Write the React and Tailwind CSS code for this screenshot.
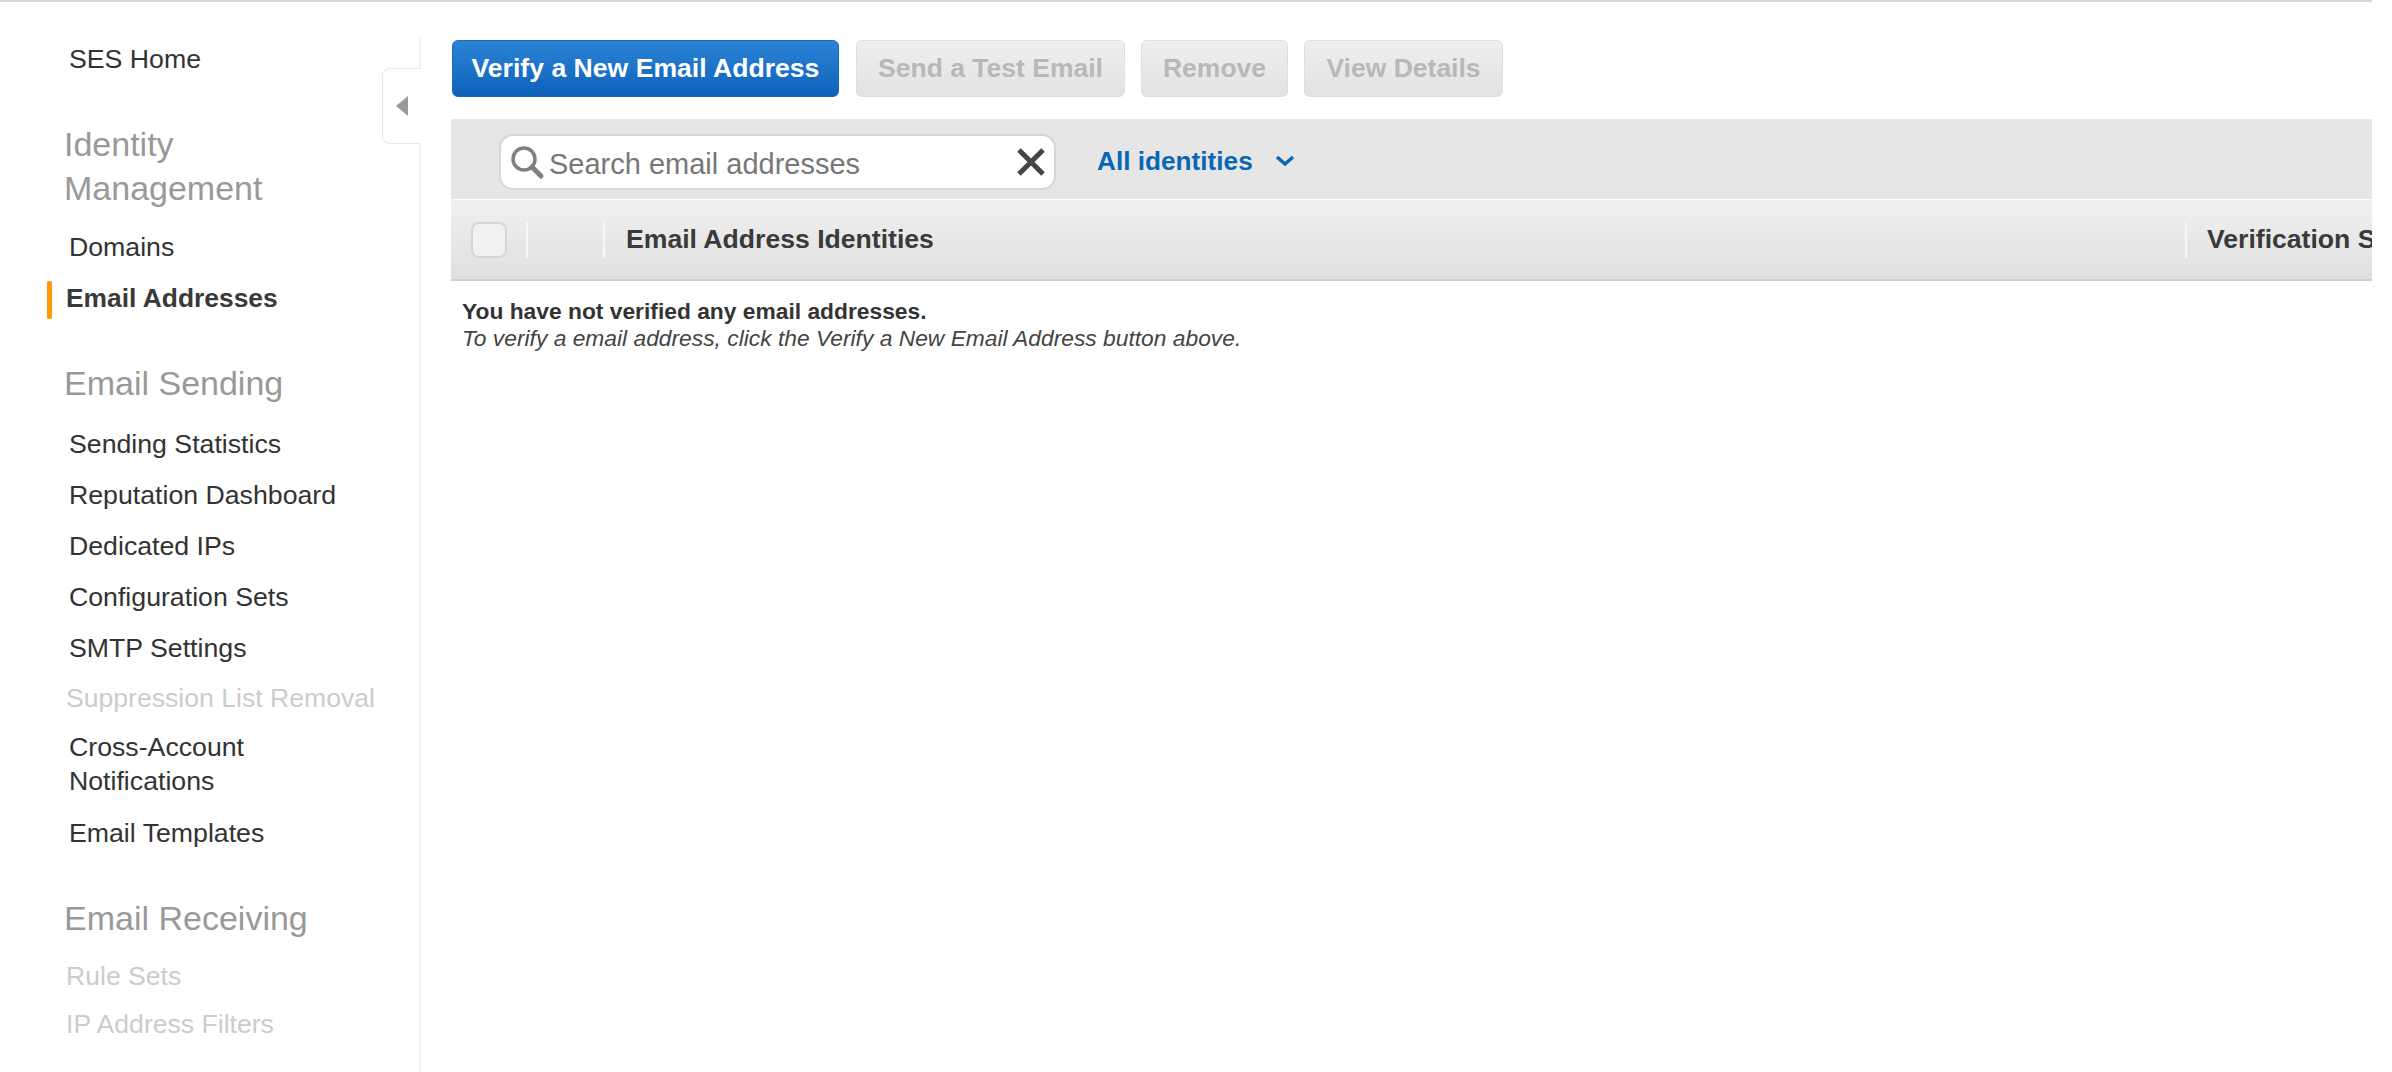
import React from 'react';

const font = 'font-["Liberation_Sans",Arial,sans-serif]';

const NavLink = ({ children, className = '' }) => (
  <div className={`pl-[69px] text-[26.7px] leading-[34px] text-[#333] ${className}`}>{children}</div>
);

const NavMuted = ({ children, className = '' }) => (
  <div className={`pl-[66px] text-[26.6px] leading-[34px] text-[#ccc] ${className}`}>{children}</div>
);

const NavHeading = ({ children, className = '' }) => (
  <div className={`pl-[64px] pr-[100px] text-[34px] leading-[44px] text-[#999] ${className}`}>{children}</div>
);

const Sidebar = () => (
  <aside className="relative h-[1034px] w-[421px] shrink-0 border-r-2 border-[#f2f2f2] pt-[4px]">
    <NavLink>SES Home</NavLink>
    <NavHeading className="mt-[46px]">Identity Management</NavHeading>
    <NavLink className="mt-[20px]">Domains</NavLink>
    <div className="relative mt-[17px] pl-[66px] text-[26.4px] leading-[34px] font-bold text-[#3a3a3a]">
      <span className="absolute left-[47px] top-0 h-[38px] w-[5px] rounded-[2px] bg-[#ff9900]"></span>
      Email Addresses
    </div>
    <NavHeading className="mt-[46px]">Email Sending</NavHeading>
    <NavLink className="mt-[22px]">Sending Statistics</NavLink>
    <NavLink className="mt-[17px]">Reputation Dashboard</NavLink>
    <NavLink className="mt-[17px]">Dedicated IPs</NavLink>
    <NavLink className="mt-[17px]">Configuration Sets</NavLink>
    <NavLink className="mt-[17px]">SMTP Settings</NavLink>
    <NavMuted className="mt-[16px]">Suppression List Removal</NavMuted>
    <NavLink className="mt-[15px]">Cross-Account</NavLink>
    <NavLink>Notifications</NavLink>
    <NavLink className="mt-[18px]">Email Templates</NavLink>
    <NavHeading className="mt-[46px]">Email Receiving</NavHeading>
    <NavMuted className="mt-[19px]">Rule Sets</NavMuted>
    <NavMuted className="mt-[14px]">IP Address Filters</NavMuted>

    <div className="absolute right-[-2px] top-[30px] flex h-[76px] w-[39px] items-center rounded-l-[8px] border border-r-0 border-[#e8e8e8] bg-white pl-[13px]">
      <svg width="12" height="20" viewBox="0 0 12 20"><path d="M12 0v20L0 10z" fill="#999" /></svg>
    </div>
  </aside>
);

const DisabledButton = ({ w, children }) => (
  <button className={`h-[57px] ${w} rounded-[6px] border border-[#dedede] bg-gradient-to-b from-[#efefef] to-[#e2e2e2] text-[26.5px] font-bold text-[#b8b8b8]`}>
    {children}
  </button>
);

export default function App() {
  return (
    <div className={`${font} h-[1072px] w-[2392px] overflow-hidden bg-white`}>
      <div className="h-[2px] w-[2372px] bg-[#d8d8d8]"></div>
      <div className="flex w-[2372px] pt-[36px]">
        <Sidebar />
        <main className="ml-[30px] min-w-0 flex-1 overflow-hidden pt-[2px]">
          <div className="flex h-[57px] items-center">
            <button className="ml-[1px] h-[57px] w-[387px] rounded-[6px] border border-[#1a6ab8] bg-gradient-to-b from-[#2b83d6] to-[#0a62b8] text-[26.6px] font-bold text-white">
              Verify a New Email Address
            </button>
            <div className="ml-[17px] flex gap-[16px]">
              <DisabledButton w="w-[269px]">Send a Test Email</DisabledButton>
              <DisabledButton w="w-[147px]">Remove</DisabledButton>
              <DisabledButton w="w-[199px]">View Details</DisabledButton>
            </div>
          </div>

          <div className="mt-[22px] flex h-[80px] items-start bg-[#e6e6e6] pl-[48px] pt-[15px]">
            <div className="flex h-[56px] w-[557px] items-center rounded-[14px] border-2 border-[#d6d6d6] bg-white pl-[8px] pr-[8px]">
              <svg width="36" height="36" viewBox="0 0 36 36" fill="none" className="shrink-0">
                <circle cx="15" cy="15" r="11" stroke="#808080" strokeWidth="3.5" />
                <path d="M23 23l9 9" stroke="#808080" strokeWidth="5" strokeLinecap="round" />
              </svg>
              <span className="ml-[4px] mt-[5px] flex-1 text-[29px] text-[#777]">Search email addresses</span>
              <svg width="30" height="30" viewBox="0 0 30 30" fill="none" className="shrink-0">
                <path d="M3 3l24 24M27 3L3 27" stroke="#444" strokeWidth="5" />
              </svg>
            </div>
            <span className="ml-[41px] mt-[8px] text-[26.2px] font-bold text-[#0a66b5]">All identities</span>
            <svg width="20" height="12" viewBox="0 0 20 12" fill="none" className="ml-[22px] mt-[21px]">
              <path d="M2 2l8 7 8-7" stroke="#0a66b5" strokeWidth="3.5" />
            </svg>
          </div>

          <div className="mt-[1px] flex h-[81px] items-center border-b-2 border-[#cfcfcf] bg-gradient-to-b from-[#f0f0f0] to-[#e0e0e0]">
            <div className="ml-[20px] h-[36px] w-[36px] shrink-0 rounded-[8px] border-2 border-[#d6d6d6] bg-[#f1f1f1]"></div>
            <div className="ml-[19px] h-[36px] w-[2px] shrink-0 bg-[#f7f7f7]"></div>
            <div className="ml-[75px] h-[36px] w-[2px] shrink-0 bg-[#f7f7f7]"></div>
            <div className="ml-[21px] w-[1559px] shrink-0 text-[26.6px] font-bold text-[#3a3a3a]">Email Address Identities</div>
            <div className="h-[36px] w-[2px] shrink-0 bg-[#f7f7f7]"></div>
            <div className="ml-[20px] shrink-0 whitespace-nowrap text-[26.6px] font-bold text-[#3a3a3a]">Verification Status</div>
          </div>

          <div className="pl-[11px] pt-[17px] text-[22.8px] leading-[27px] text-[#333]">
            <div className="font-bold">You have not verified any email addresses.</div>
            <div className="italic text-[#444]">To verify a email address, click the Verify a New Email Address button above.</div>
          </div>
        </main>
      </div>
    </div>
  );
}
